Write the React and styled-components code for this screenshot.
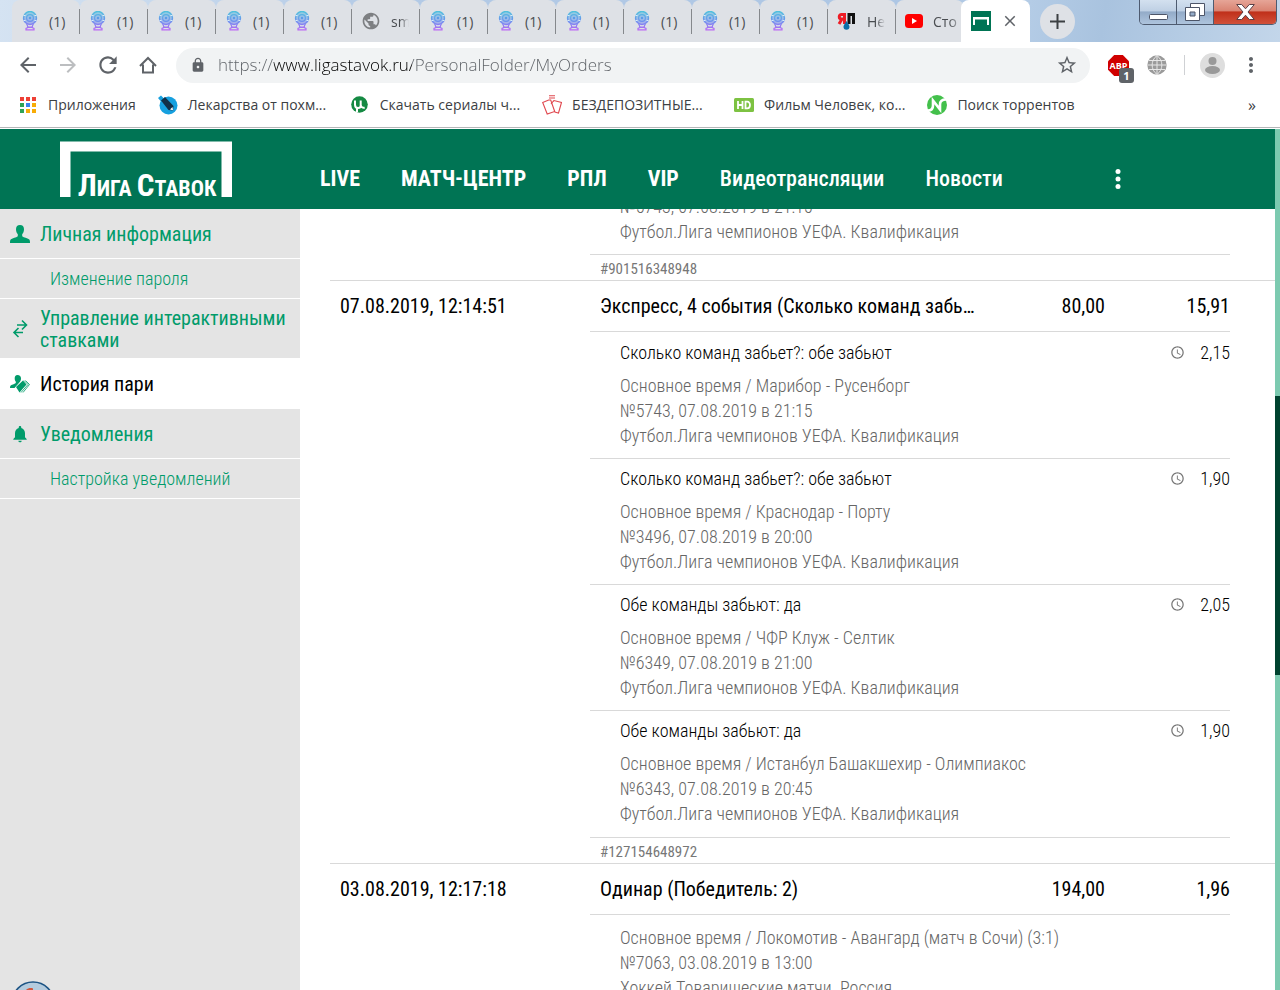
import styled, { createGlobalStyle } from 'styled-components';
import {
  MdAccessTime,
  MdArrowBack,
  MdArrowForward,
  MdClose,
  MdLock,
  MdMoreVert,
  MdNotifications,
  MdPublic,
  MdRefresh,
  MdStarBorder,
} from 'react-icons/md';

const GlobalStyle = createGlobalStyle`
  * {
    box-sizing: border-box;
  }

  body {
    margin: 0;
    overflow: hidden;
    background-color: #ffffff;
    font-family: 'Roboto Condensed', 'Liberation Sans Narrow', Roboto, sans-serif;
  }

  button {
    border: none;
    background: none;
    padding: 0;
    font-family: inherit;
    cursor: pointer;
  }

  a {
    text-decoration: none;
  }

  svg {
    display: block;
    flex-shrink: 0;
  }
`;

const Window = styled.div`
  display: flex;
  flex-direction: column;
  height: 100vh;
  overflow: hidden;
`;

/* ---------- browser ---------- */

const Browser = styled.header`
  flex-shrink: 0;
  font-family: 'Open Sans', 'Noto Sans', sans-serif;
  color: #3c4043;
  border-bottom: 1px solid #b4b6b8;
  margin-bottom: 1px;
`;

const TabStrip = styled.div`
  display: flex;
  height: 42px;
  padding-left: 12px;
  background: linear-gradient(100deg, #d5e3f2 0%, #b3cae6 30%, #adc6e4 70%, #b4cce6 80%, #a9c3df 86%, #c3d6ea 100%);
`;

const Tab = styled.button`
  display: flex;
  align-items: center;
  flex: 0 1 68px;
  min-width: 0;
  height: 42px;
  padding-left: 9px;
  gap: 10px;
  border-radius: 8px 8px 0 0;
  background-color: #dee1e6;
  color: #4a4d51;
  font-size: 14px;
`;

const TabLabel = styled.span`
  flex: 1;
  min-width: 0;
  overflow: hidden;
  white-space: nowrap;
  text-align: left;
  mask-image: ${({ $fade }) => ($fade ? 'linear-gradient(to right, #000 50%, transparent 100%)' : 'none')};
`;

const TabDivider = styled.span`
  width: 1px;
  height: 25px;
  background-color: #85888c;
`;

const ActiveTab = styled(Tab)`
  flex: 0 0 69px;
  margin-left: -3px;
  padding-left: 10px;
  background-color: #ffffff;
`;

const NewTab = styled.button`
  display: flex;
  align-items: center;
  justify-content: center;
  width: 35px;
  height: 35px;
  margin: 4px 0 0 10px;
  border-radius: 50%;
  background-color: #dee1e6;
`;

const WindowButtons = styled.div`
  display: flex;
  height: 25px;
  margin-left: auto;
  margin-right: 3px;
  border: 1px solid #4e5b70;
  border-top: none;
  border-radius: 0 0 5px 5px;
  overflow: hidden;
`;

const WindowButton = styled.button`
  display: flex;
  align-items: center;
  justify-content: center;
  width: ${({ $close }) => ($close ? '62px' : '37px')};
  border-right: ${({ $close }) => ($close ? 'none' : '1px solid #4e5b70')};
  background: ${({ $close }) =>
    $close
      ? 'linear-gradient(#e6a597 0%, #d98372 45%, #c0301a 50%, #d1513a 100%)'
      : 'linear-gradient(#d3e0ef 0%, #bfd0e4 45%, #93abc8 50%, #aec4dd 100%)'};
`;

const Toolbar = styled.div`
  display: flex;
  align-items: center;
  height: 46px;
  padding: 0 17px 0 16px;
  background-color: #ffffff;
`;

const ToolButton = styled.button`
  display: flex;
  align-items: center;
  justify-content: center;
  width: 24px;
  height: 24px;
  margin-right: 16px;
  color: ${({ $muted }) => ($muted ? '#bcbec0' : '#5f6368')};
`;

const AddressBar = styled.label`
  display: flex;
  align-items: center;
  flex: 1;
  height: 35px;
  padding: 0 12px 0 14px;
  border-radius: 18px;
  background-color: #f1f3f4;
  color: #5f6368;
`;

const AddressInput = styled.input`
  flex: 1;
  min-width: 0;
  margin-left: 12px;
  padding: 0 0 2px;
  border: none;
  outline: none;
  font-family: 'Open Sans', 'Noto Sans', sans-serif;
  font-size: 17px;
  font-weight: 300;
  background: linear-gradient(to right, #5c6065 56px, #000000 56px 194px, #5c6065 194px);
  background-clip: text;
  -webkit-background-clip: text;
  color: transparent;
`;

const Extensions = styled.div`
  display: flex;
  align-items: center;
  gap: 15px;
  margin-left: 16px;
  color: #5f6368;
`;

const ExtensionButton = styled.button`
  position: relative;
  display: flex;
  justify-content: center;
  width: 24px;
  color: inherit;
`;

const Badge = styled.span`
  position: absolute;
  right: -4px;
  bottom: -7px;
  width: 15px;
  height: 15px;
  border-radius: 3px;
  background-color: #5f6368;
  color: #ffffff;
  font-size: 11px;
  font-weight: 700;
  line-height: 15px;
`;

const ToolDivider = styled.span`
  width: 1px;
  height: 20px;
  background-color: #cfd1d4;
`;

const Bookmarks = styled.nav`
  display: flex;
  align-items: center;
  height: 39px;
  padding: 0 24px 6px 18px;
  gap: 22px;
  background-color: #ffffff;
`;

const Bookmark = styled.a`
  display: flex;
  align-items: center;
  gap: 10px;
  min-width: ${({ $long }) => ($long ? '170px' : '0')};
  color: #3c4043;
  font-size: 14px;
  line-height: 20px;
  white-space: nowrap;
`;

const BookmarkIcon = styled.span`
  display: flex;
  justify-content: center;
  width: 20px;
`;

const MoreBookmarks = styled.button`
  margin-left: auto;
  color: #3c4043;
  font-size: 16px;
  line-height: 20px;
`;

/* ---------- site ---------- */

const Viewport = styled.div`
  display: flex;
  flex: 1;
  min-height: 0;
`;

const Site = styled.div`
  display: flex;
  flex-direction: column;
  flex: 1;
  min-width: 0;
`;

const ScrollTrack = styled.div`
  display: grid;
  grid-template-rows: 267fr 279fr 315fr;
  width: 5px;
  background-color: #7ccab0;
`;

const ScrollThumb = styled.div`
  grid-row: 2;
  background-color: #00432f;
`;

const SiteHeader = styled.div`
  display: flex;
  flex-shrink: 0;
  height: 80px;
  padding-left: 60px;
  background-color: #007454;
`;

const LogoLink = styled.a`
  width: 260px;
  padding-top: 12px;
`;

const SiteNav = styled.nav`
  display: flex;
  align-items: center;
  gap: 41px;
  padding-top: 20px;
`;

const NavLink = styled.a`
  color: #ffffff;
  font-size: 22px;
  font-weight: ${({ $bold }) => ($bold ? 700 : 500)};
  line-height: 26px;
  white-space: nowrap;
`;

const NavMore = styled.button`
  margin: 20px 0 0 108px;
  color: #ffffff;
`;

const Columns = styled.div`
  display: flex;
  flex: 1;
  min-height: 0;
`;

const Sidebar = styled.nav`
  flex: 0 0 300px;
  background-color: #e4e4e4;
`;

const SideLink = styled.a`
  display: flex;
  align-items: center;
  gap: 10px;
  min-height: 50px;
  padding: 8px 10px 7px;
  border-bottom: 1px solid #ffffff;
  background-color: ${({ $active }) => ($active ? '#ffffff' : 'transparent')};
  color: ${({ $active }) => ($active ? '#000000' : '#009b6a')};
  font-size: 20px;
  line-height: 22px;

  svg {
    color: #009b6a;
  }
`;

const SideSubLink = styled.a`
  display: flex;
  align-items: center;
  height: 40px;
  padding-left: 50px;
  border-bottom: 1px solid #ffffff;
  color: #009b6a;
  font-size: 18px;
  font-weight: 300;
`;

const Main = styled.main`
  flex: 1;
  min-width: 0;
  padding-left: 30px;
  overflow: hidden;
  background-color: #ffffff;
`;

const Orders = styled.table`
  width: 100%;
  margin-top: -25px;
  border-collapse: separate;
  border-spacing: 0;
  table-layout: fixed;
  color: #000000;
`;

const Column = styled.col`
  width: ${({ $width }) => $width || 'auto'};
`;

const SummaryCell = styled.td`
  height: 51px;
  padding: 0 0 0 ${({ $indent }) => ($indent ? '10px' : '0')};
  border-bottom: 1px solid ${({ $line }) => ($line ? '#d9d9d9' : 'transparent')};
  font-size: 20px;
  line-height: 24px;
  text-align: ${({ $right }) => ($right ? 'right' : 'left')};
  white-space: nowrap;
`;

const EmptyCell = styled.td`
  padding: 0;
  border-bottom: ${({ $line }) => ($line ? '1px solid #d9d9d9' : 'none')};
`;

const eventPadding = ({ $plain, $first, $last }) => {
  if ($plain) return '10px 0 10px 30px';
  return `${$first ? 8 : 7}px 0 ${$last ? 11 : 10}px 30px`;
};

const EventCell = styled.td`
  padding: ${eventPadding};
  border-bottom: ${({ $last }) => ($last ? 'none' : '1px solid #d9d9d9')};
  font-size: 18px;
  font-weight: 300;
  line-height: 25px;
`;

const EventHead = styled.div`
  display: flex;
  align-items: center;
  margin-bottom: 8px;
`;

const EventOdds = styled.span`
  display: flex;
  align-items: center;
  gap: 15px;
  margin-left: auto;

  svg {
    color: #777777;
  }
`;

const EventLine = styled.div`
  color: #666666;
  white-space: nowrap;
`;

const NumberCell = styled.td`
  height: 27px;
  padding: 2px 0 0 10px;
  border-top: 1px solid #d9d9d9;
  border-bottom: 1px solid #d9d9d9;
  color: #777777;
  font-size: 15px;
  line-height: 20px;
`;

const StartOrb = styled.svg`
  position: fixed;
  left: 11px;
  bottom: 0;
`;

/* ---------- drawings ---------- */

const LampIcon = () => (
  <svg width="18" height="20" viewBox="0 0 18 20" fill="none">
    <defs>
      <linearGradient id="lamp" x1="0" y1="0" x2="0" y2="20" gradientUnits="userSpaceOnUse">
        <stop offset="0" stopColor="#4fc3dc" />
        <stop offset="0.55" stopColor="#6f8df0" />
        <stop offset="1" stopColor="#c264f5" />
      </linearGradient>
    </defs>
    <circle cx="9" cy="7" r="6.5" fill="url(#lamp)" fillOpacity="0.55" stroke="url(#lamp)" strokeWidth="1.4" />
    <circle cx="9" cy="7" r="3.4" stroke="url(#lamp)" strokeWidth="1.2" />
    <circle cx="9" cy="7" r="1.2" fill="#5a9be8" />
    <path d="M2.5 4.5h2M13.5 4.5h2M2.5 9.5h2M13.5 9.5h2" stroke="#d8eef8" />
    <path d="M5.5 12.5 7 16h4l1.5-3.5M6 16.200h6M5 18.800h8v-1.400l-2-1H7l-2 1z" stroke="url(#lamp)" strokeWidth="1.2" />
  </svg>
);

const YapIcon = () => (
  <svg width="20" height="20" viewBox="0 0 20 20" fill="none">
    <path d="M7.500 2v11M8 3.500H4.500a2 2 0 0 0 0 4.500H8M5 8 2 13" stroke="#ee1c25" strokeWidth="3" />
    <path d="M12 13V3.500h4.500V13" stroke="#111111" strokeWidth="3" />
    <path d="M9.500 10c1.500 2.500 3 4 3 5.700a3 3 0 0 1-6 0c0-1.700 1.500-3.200 3-5.700z" fill="#0a6fa8" />
  </svg>
);

const YoutubeIcon = () => (
  <svg width="18" height="14" viewBox="0 0 18 14">
    <rect width="18" height="14" rx="3.500" fill="#ff0000" />
    <path d="M7 4v6l5-3z" fill="#ffffff" />
  </svg>
);

const LigaIcon = () => (
  <svg width="20" height="20" viewBox="0 0 20 20">
    <rect width="20" height="20" fill="#007454" />
    <path d="M2 6h16v8h-2V8.500H4V14H2z" fill="#ffffff" />
  </svg>
);

const HomeIcon = () => (
  <svg width="18" height="18" viewBox="0 0 18 18" fill="none" stroke="currentColor" strokeWidth="2">
    <path d="M1 10 9 2l8 8M4 8.500V16.500h10V8.500" />
  </svg>
);

const AppsIcon = () => (
  <svg width="18" height="18" viewBox="0 0 18 18">
    <path d="M1 1h4v4H1zM7 1h4v4H7zM13 1h4v4h-4z" fill="#ee4035" />
    <path d="M1 7h4v4H1zM1 13h4v4H1z" fill="#2fa356" />
    <path d="M7 7h4v4H7z" fill="#3b82f0" />
    <path d="M13 7h4v4h-4zM7 13h4v4H7zM13 13h4v4h-4z" fill="#f8ac06" />
  </svg>
);

const PencilIcon = () => (
  <svg width="20" height="20" viewBox="0 0 20 20">
    <circle cx="10.500" cy="10.500" r="9" fill="#16a0df" />
    <path d="M0 3 3 .500l3 3L3 6.500z" fill="#16a0df" />
    <path d="M3 5.500 7 2l8.500 9-.500 4.500-4.500-.500z" fill="#123047" />
    <path d="m12 14.500 2.500-2.500.500 3.200z" fill="#ffffff" />
  </svg>
);

const TorrentIcon = () => (
  <svg width="17" height="17" viewBox="0 0 17 17" fill="none">
    <circle cx="8.500" cy="8.500" r="8.300" fill="#158a43" />
    <path d="M4 4.500v4.200c0 2.300 1.300 3.200 3 3.200s2.700-1 2.700-2.500V4.500M9.700 9c.3 2 1.800 3.200 4 2.700M6 12v4" stroke="#ffffff" strokeWidth="2" />
  </svg>
);

const CardsIcon = () => (
  <svg width="20" height="20" viewBox="0 0 20 20" fill="none" stroke="#e0484f" strokeWidth="1.100">
    <path d="m.700 7.500 6-2.500h2l4 11.500-7.500 2.500z" />
    <path d="m11 6.500 1-1 7.500 2-3 10.500-4-1M9 9l2-2.500M7 .700h6M7 3h6" />
  </svg>
);

const HdIcon = () => (
  <svg width="20" height="14" viewBox="0 0 20 14" fill="none">
    <rect width="20" height="14" rx="1.500" fill="#7dc242" />
    <path d="M4 3v8M8.500 3v8M4 7h4.500M11.500 3.700v6.600h1.700c3.700 0 3.700-6.600 0-6.600z" stroke="#ffffff" strokeWidth="1.800" />
  </svg>
);

const NnmIcon = () => (
  <svg width="20" height="20" viewBox="0 0 20 20" fill="none">
    <circle cx="10" cy="10" r="10" fill="#43c04b" />
    <path d="M1 15.500c3.500 0 5-1.500 5-5V5.500l7 9V9.500c0-3.500 2-5 6-5" stroke="#ffffff" strokeWidth="2.600" />
  </svg>
);

const AbpIcon = () => (
  <svg width="21" height="21" viewBox="0 0 21 21">
    <path d="M6.200 0h8.600L21 6.200v8.600L14.800 21H6.200L0 14.800V6.200z" fill="#d00000" />
    <text x="10.500" y="14" fill="#ffffff" fontFamily="Open Sans, sans-serif" fontSize="9" fontWeight="700" textAnchor="middle">
      ABP
    </text>
  </svg>
);

const GlobeIcon = () => (
  <svg width="20" height="20" viewBox="0 0 20 20" fill="none">
    <circle cx="10" cy="10" r="9.700" fill="#9a9a9a" />
    <path
      d="M10 0v20M.500 10h19M2 5.500h16M2 14.500h16M10 .500c-6.500 5-6.500 14 0 19M10 .500c6.500 5 6.500 14 0 19"
      stroke="#e6e6e6"
    />
  </svg>
);

const ProfileIcon = () => (
  <svg width="25" height="25" viewBox="0 0 25 25">
    <circle cx="12.500" cy="12.500" r="12.500" fill="#dedede" />
    <circle cx="12.500" cy="8" r="4" fill="#999999" />
    <ellipse cx="12.500" cy="17" rx="7.500" ry="4" fill="#999999" />
  </svg>
);

const Logo = () => (
  <svg width="172" height="66" viewBox="0 0 172 66">
    <path d="M0 .500h172V56h-10.500V10.500h-151V56H0z" fill="#ffffff" />
    <text
      x="87"
      y="55"
      fill="#ffffff"
      fontFamily="Roboto Condensed, Liberation Sans Narrow, Roboto, sans-serif"
      fontWeight="700"
      fontSize="22"
      textAnchor="middle"
    >
      <tspan fontSize="31">Л</tspan>ИГА <tspan fontSize="31">С</tspan>ТАВОК
    </text>
  </svg>
);

const PersonIcon = () => (
  <svg width="20" height="18" viewBox="0 0 20 18" fill="currentColor">
    <path d="M10 0c2.600 0 4 1.500 4 4.300 0 2.300-.800 4-1.800 5v2c1.800 1.400 5 1.800 6.800 3 .800.600 1 1.700 1 3.700H0c0-2 .200-3.100 1-3.700 1.800-1.200 5-1.600 6.800-3v-2C6.800 8.300 6 6.600 6 4.300 6 1.500 7.400 0 10 0z" />
  </svg>
);

const SwapIcon = () => (
  <svg width="20" height="20" viewBox="0 0 20 20" fill="none" stroke="currentColor" strokeWidth="1.600">
    <path d="M7 6h9M12 1.500 16.500 6 12 10.500M13 13.500H4M8.500 9 4 13.500 8.500 18" />
  </svg>
);

const HistoryIcon = () => (
  <svg width="20" height="18" viewBox="0 0 20 18" fill="currentColor">
    <path d="M7.500 0C9.700 0 11 1.200 11 3.500 11 5 10.500 6 10 6.700L4.500 13H0c0-2 .500-2.500 2-3.200 1.200-.600 3-.900 3.800-1.800V6.700C5.200 6 4.700 5 4.700 3.500 4.700 1.200 5.500 0 7.500 0z" />
    <path d="m6 12 7-6.500 3.500 4-7 8z" />
    <path d="m14 5.500 4 4-7 8M15.500 5.500 19.500 9.500l-6.500 8" fill="none" stroke="currentColor" strokeWidth=".8" />
  </svg>
);

/* ---------- data ---------- */

const lampTab = { icon: <LampIcon />, label: '(1)' };

const tabs = [
  lampTab,
  lampTab,
  lampTab,
  lampTab,
  lampTab,
  { icon: <MdPublic size={20} color="#7d7f82" />, label: 'sm', fade: true },
  lampTab,
  lampTab,
  lampTab,
  lampTab,
  lampTab,
  lampTab,
  { icon: <YapIcon />, label: 'Не', fade: true },
  { icon: <YoutubeIcon />, label: 'Сто', fade: true },
];

const bookmarks = [
  { icon: <AppsIcon />, label: 'Приложения' },
  { icon: <PencilIcon />, label: 'Лекарства от похм...', long: true },
  { icon: <TorrentIcon />, label: 'Скачать сериалы ч...', long: true },
  { icon: <CardsIcon />, label: 'БЕЗДЕПОЗИТНЫЕ...', long: true },
  { icon: <HdIcon />, label: 'Фильм Человек, ко...', long: true },
  { icon: <NnmIcon />, label: 'Поиск торрентов' },
];

const navLinks = [
  { label: 'LIVE', bold: true },
  { label: 'МАТЧ-ЦЕНТР', bold: true },
  { label: 'РПЛ', bold: true },
  { label: 'VIP', bold: true },
  { label: 'Видеотрансляции' },
  { label: 'Новости' },
];

const league = 'Футбол.Лига чемпионов УЕФА. Квалификация';

const orders = [
  {
    number: '#901516348948',
    events: [{ lines: ['№5743, 07.08.2019 в 21:15', league] }],
  },
  {
    number: '#127154648972',
    date: '07.08.2019, 12:14:51',
    title: 'Экспресс, 4 события (Сколько команд забь…',
    sum: '80,00',
    odds: '15,91',
    events: [
      {
        title: 'Сколько команд забьет?: обе забьют',
        odds: '2,15',
        lines: ['Основное время / Марибор - Русенборг', '№5743, 07.08.2019 в 21:15', league],
      },
      {
        title: 'Сколько команд забьет?: обе забьют',
        odds: '1,90',
        lines: ['Основное время / Краснодар - Порту', '№3496, 07.08.2019 в 20:00', league],
      },
      {
        title: 'Обе команды забьют: да',
        odds: '2,05',
        lines: ['Основное время / ЧФР Клуж - Селтик', '№6349, 07.08.2019 в 21:00', league],
      },
      {
        title: 'Обе команды забьют: да',
        odds: '1,90',
        lines: ['Основное время / Истанбул Башакшехир - Олимпиакос', '№6343, 07.08.2019 в 20:45', league],
      },
    ],
  },
  {
    date: '03.08.2019, 12:17:18',
    title: 'Одинар (Победитель: 2)',
    sum: '194,00',
    odds: '1,96',
    events: [
      {
        lines: [
          'Основное время / Локомотив - Авангард (матч в Сочи) (3:1)',
          '№7063, 03.08.2019 в 13:00',
          'Хоккей.Товарищеские матчи. Россия',
        ],
      },
    ],
  },
];

/* ---------- parts ---------- */

const BrowserBar = () => (
  <Browser>
    <TabStrip>
      {tabs.map((tab, index) => (
        <Tab key={index}>
          {tab.icon}
          <TabLabel $fade={tab.fade}>{tab.label}</TabLabel>
          {index < tabs.length - 1 && <TabDivider />}
        </Tab>
      ))}
      <ActiveTab aria-label="Лига Ставок">
        <LigaIcon />
        <MdClose size={18} color="#5f6368" />
      </ActiveTab>
      <NewTab aria-label="+">
        <svg width="15" height="15" viewBox="0 0 15 15" stroke="#3c4043" strokeWidth="2">
          <path d="M7.500 0v15M0 7.500h15" />
        </svg>
      </NewTab>
      <WindowButtons>
        <WindowButton aria-label="_">
          <svg width="19" height="15" viewBox="0 0 19 15">
            <rect x=".5" y="9.500" width="18" height="5" rx="1" fill="#ffffff" stroke="#4d5568" />
          </svg>
        </WindowButton>
        <WindowButton aria-label="□">
          <svg width="20" height="18" viewBox="0 0 20 18" fill="#ffffff" stroke="#4d5568">
            <path d="M5.500.500h14v12h-14z" />
            <path d="M.500 4.500h14v13H.500z" />
            <path d="M5 9h5v4H5z" fill="#93abc8" />
          </svg>
        </WindowButton>
        <WindowButton $close aria-label="×">
          <svg width="19" height="16" viewBox="0 0 19 16" fill="#ffffff" stroke="#5a4046">
            <path d="M.700.500h5l3.800 4.300L13.300.500h5l-6.300 7.500 6.300 7.500h-5l-3.800-4.300-3.800 4.300h-5L7 8z" />
          </svg>
        </WindowButton>
      </WindowButtons>
    </TabStrip>
    <Toolbar>
      <ToolButton aria-label="←">
        <MdArrowBack size={24} />
      </ToolButton>
      <ToolButton $muted aria-label="→">
        <MdArrowForward size={24} />
      </ToolButton>
      <ToolButton aria-label="↻">
        <MdRefresh size={26} />
      </ToolButton>
      <ToolButton aria-label="⌂">
        <HomeIcon />
      </ToolButton>
      <AddressBar>
        <MdLock size={16} />
        <AddressInput type="text" aria-label="URL" defaultValue="https://www.ligastavok.ru/PersonalFolder/MyOrders" />
        <MdStarBorder size={22} />
      </AddressBar>
      <Extensions>
        <ExtensionButton aria-label="ABP">
          <AbpIcon />
          <Badge>1</Badge>
        </ExtensionButton>
        <ExtensionButton aria-label="www">
          <GlobeIcon />
        </ExtensionButton>
        <ToolDivider />
        <ExtensionButton aria-label="@">
          <ProfileIcon />
        </ExtensionButton>
        <ExtensionButton aria-label="⋮">
          <MdMoreVert size={24} />
        </ExtensionButton>
      </Extensions>
    </Toolbar>
    <Bookmarks>
      {bookmarks.map(({ icon, label, long }) => (
        <Bookmark key={label} href="#" $long={long}>
          <BookmarkIcon>{icon}</BookmarkIcon>
          {label}
        </Bookmark>
      ))}
      <MoreBookmarks>»</MoreBookmarks>
    </Bookmarks>
  </Browser>
);

const OrderRows = ({ order }) => (
  <tbody>
    {order.title && (
      <tr>
        <SummaryCell $indent>{order.date}</SummaryCell>
        <SummaryCell $indent $line>
          {order.title}
        </SummaryCell>
        <SummaryCell $right $line>
          {order.sum}
        </SummaryCell>
        <SummaryCell $right $line>
          {order.odds}
        </SummaryCell>
        <EmptyCell />
      </tr>
    )}
    {order.events.map((event, index) => (
      <tr key={index}>
        <EmptyCell />
        <EventCell
          colSpan={3}
          $plain={!event.title}
          $first={index === 0}
          $last={index === order.events.length - 1}
        >
          {event.title && (
            <EventHead>
              {event.title}
              <EventOdds>
                <MdAccessTime size={15} />
                {event.odds}
              </EventOdds>
            </EventHead>
          )}
          {event.lines.map((line) => (
            <EventLine key={line}>{line}</EventLine>
          ))}
        </EventCell>
        <EmptyCell />
      </tr>
    ))}
    {order.number && (
      <tr>
        <EmptyCell $line />
        <NumberCell colSpan={3}>{order.number}</NumberCell>
        <EmptyCell $line />
      </tr>
    )}
  </tbody>
);

const App = () => {
  return (
    <Window>
      <GlobalStyle />
      <BrowserBar />
      <Viewport>
        <Site>
          <SiteHeader>
            <LogoLink href="#" aria-label="Лига Ставок">
              <Logo />
            </LogoLink>
            <SiteNav>
              {navLinks.map(({ label, bold }) => (
                <NavLink key={label} href="#" $bold={bold}>
                  {label}
                </NavLink>
              ))}
            </SiteNav>
            <NavMore aria-label="⋮">
              <svg width="14" height="20" viewBox="0 0 14 20" fill="currentColor">
                <circle cx="7" cy="2.500" r="2.500" />
                <circle cx="7" cy="10" r="2.500" />
                <circle cx="7" cy="17.500" r="2.500" />
              </svg>
            </NavMore>
          </SiteHeader>
          <Columns>
            <Sidebar>
              <SideLink href="#">
                <PersonIcon />
                Личная информация
              </SideLink>
              <SideSubLink href="#">Изменение пароля</SideSubLink>
              <SideLink href="#">
                <SwapIcon />
                Управление интерактивными ставками
              </SideLink>
              <SideLink href="#" $active>
                <HistoryIcon />
                История пари
              </SideLink>
              <SideLink href="#">
                <MdNotifications size={20} />
                Уведомления
              </SideLink>
              <SideSubLink href="#">Настройка уведомлений</SideSubLink>
            </Sidebar>
            <Main>
              <Orders>
                <colgroup>
                  <Column $width="260px" />
                  <Column />
                  <Column $width="130px" />
                  <Column $width="125px" />
                  <Column $width="45px" />
                </colgroup>
                {orders.map((order, index) => (
                  <OrderRows key={index} order={order} />
                ))}
              </Orders>
            </Main>
          </Columns>
        </Site>
        <ScrollTrack>
          <ScrollThumb />
        </ScrollTrack>
      </Viewport>
      <StartOrb width="44" height="9" viewBox="0 0 44 9">
        <circle cx="22" cy="22" r="21" fill="#b4cbdd" stroke="#1d5484" strokeWidth="1.500" />
        <path d="M15 9c2-2 5-2.500 7-1.500V9z" fill="#d4553a" />
      </StartOrb>
    </Window>
  );
};

export default App;
